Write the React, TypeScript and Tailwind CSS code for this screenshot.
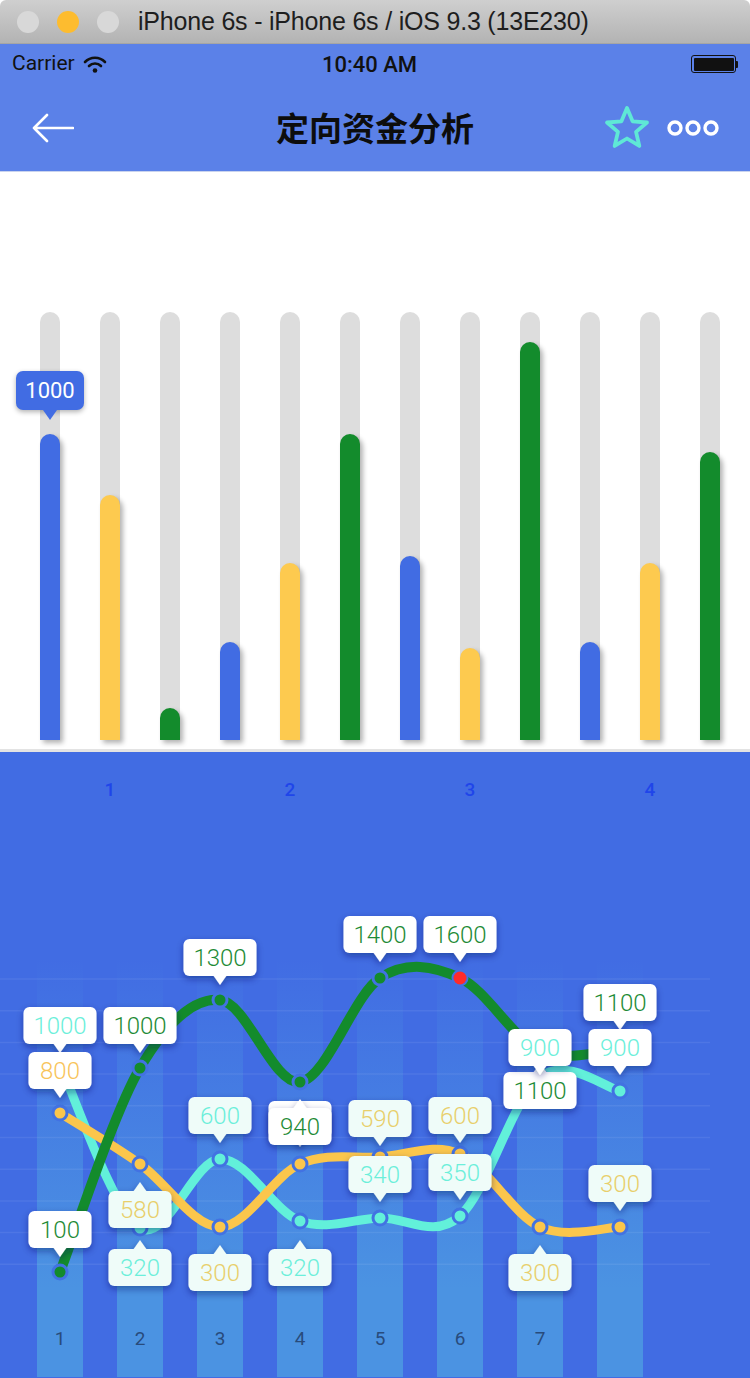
import React from 'react';

const GREEN = '#138b2c';
const CYAN = '#62f0da';
const YELLOW = '#fbc64c';

const bars = [
  { h: 306, c: 'bg-[#416ce3]' },
  { h: 245, c: 'bg-[#fdca4f]' },
  { h: 32, c: 'bg-[#138b2c]' },
  { h: 98, c: 'bg-[#416ce3]' },
  { h: 177, c: 'bg-[#fdca4f]' },
  { h: 306, c: 'bg-[#138b2c]' },
  { h: 184, c: 'bg-[#416ce3]' },
  { h: 92, c: 'bg-[#fdca4f]' },
  { h: 398, c: 'bg-[#138b2c]' },
  { h: 98, c: 'bg-[#416ce3]' },
  { h: 177, c: 'bg-[#fdca4f]' },
  { h: 288, c: 'bg-[#138b2c]' },
];

const xs = [60, 140, 220, 300, 380, 460, 540, 620];
const greenY = [1273, 1069, 1001, 1083, 979, 979, 1052, 1050];
const cyanY = [1066, 1229, 1160, 1222, 1219, 1217, 1078, 1092];
const yellowY = [1114, 1165, 1228, 1165, 1158, 1155, 1228, 1228];

// catmull-rom through the points
function smooth(ys: number[]) {
  const p = ys.map((y, i) => [xs[i], y]);
  let d = `M${p[0][0]},${p[0][1]}`;
  for (let i = 0; i < p.length - 1; i++) {
    const p0 = p[i - 1] || p[i];
    const p1 = p[i];
    const p2 = p[i + 1];
    const p3 = p[i + 2] || p2;
    const c1 = [p1[0] + (p2[0] - p0[0]) / 6, p1[1] + (p2[1] - p0[1]) / 6];
    const c2 = [p2[0] - (p3[0] - p1[0]) / 6, p2[1] - (p3[1] - p1[1]) / 6];
    d += ` C${c1[0]},${c1[1]} ${c2[0]},${c2[1]} ${p2[0]},${p2[1]}`;
  }
  return d;
}

type Lbl = { x: number; y: number; t: string; c: string; dir: 'up' | 'down'; tint?: boolean };

const TG = '#1e8b36';
const TC = '#6cefda';
const TY = '#e8cf6b';

const labels: Lbl[] = [
  { x: 60, y: 1008, t: '1000', c: TC, dir: 'down' },
  { x: 60, y: 1053, t: '800', c: '#f8c45a', dir: 'down' },
  { x: 140, y: 1008, t: '1000', c: TG, dir: 'down' },
  { x: 220, y: 940, t: '1300', c: TG, dir: 'down' },
  { x: 300, y: 1102, t: '', c: TY, dir: 'down' },
  { x: 300, y: 1109, t: '940', c: TG, dir: 'up' },
  { x: 380, y: 917, t: '1400', c: TG, dir: 'down' },
  { x: 460, y: 917, t: '1600', c: TG, dir: 'down' },
  { x: 540, y: 1073, t: '1100', c: TG, dir: 'up' },
  { x: 540, y: 1030, t: '900', c: TC, dir: 'down' },
  { x: 620, y: 985, t: '1100', c: TG, dir: 'down' },
  { x: 620, y: 1030, t: '900', c: TC, dir: 'down' },
  { x: 140, y: 1192, t: '580', c: TY, dir: 'up', tint: true },
  { x: 140, y: 1250, t: '320', c: TC, dir: 'up', tint: true },
  { x: 220, y: 1098, t: '600', c: TC, dir: 'down', tint: true },
  { x: 220, y: 1255, t: '300', c: TY, dir: 'up', tint: true },
  { x: 300, y: 1250, t: '320', c: TC, dir: 'up', tint: true },
  { x: 380, y: 1101, t: '590', c: TY, dir: 'down', tint: true },
  { x: 380, y: 1157, t: '340', c: TC, dir: 'down', tint: true },
  { x: 460, y: 1098, t: '600', c: TY, dir: 'down', tint: true },
  { x: 460, y: 1155, t: '350', c: TC, dir: 'down', tint: true },
  { x: 540, y: 1255, t: '300', c: TY, dir: 'up', tint: true },
  { x: 620, y: 1166, t: '300', c: TY, dir: 'down', tint: true },
  { x: 60, y: 1212, t: '100', c: TG, dir: 'down' },
];

function Label({ l }: { l: Lbl }) {
  const w = l.t.length === 4 ? 73 : 63;
  const h = 37;
  const tri =
    l.dir === 'down'
      ? `M${l.x - 7},${l.y + h - 1} L${l.x},${l.y + h + 9} L${l.x + 7},${l.y + h - 1} Z`
      : `M${l.x - 7},${l.y + 1} L${l.x},${l.y - 9} L${l.x + 7},${l.y + 1} Z`;
  const fill = l.tint ? '#effcf9' : '#ffffff';
  return (
    <g>
      <g filter="url(#lblShadow)">
        <rect x={l.x - w / 2} y={l.y} width={w} height={h} rx={6} fill={fill} />
        <path d={tri} fill={fill} />
      </g>
      {l.t && (
        <text x={l.x} y={l.y + 27} textAnchor="middle" fontSize={24} fontWeight={300} fill={l.c} fontFamily="Roboto, sans-serif">
          {l.t}
        </text>
      )}
    </g>
  );
}

function Dots({ ys, color }: { ys: number[]; color: string }) {
  return (
    <>
      {ys.map((y, i) => (
        <g key={i}>
          <circle cx={xs[i]} cy={y} r={8.5} fill="#4272e2" />
          <circle cx={xs[i]} cy={y} r={5.5} fill={color} />
        </g>
      ))}
    </>
  );
}

function Star() {
  const pts: string[] = [];
  for (let i = 0; i < 10; i++) {
    const r = i % 2 === 0 ? 21 : 9.5;
    const a = -Math.PI / 2 + (i * Math.PI) / 5;
    pts.push(`${23 + r * Math.cos(a)},${24 + r * Math.sin(a)}`);
  }
  return (
    <svg width="46" height="46" viewBox="0 0 46 46">
      <polygon points={pts.join(' ')} fill="none" stroke="#5fe8d6" strokeWidth="3.8" strokeLinejoin="round" />
    </svg>
  );
}

export default function App() {
  const gridYs = Array.from({ length: 10 }, (_, k) => 980 + k * 31.7);

  return (
    <div className="w-[750px] h-[1378px] flex flex-col bg-white overflow-hidden" style={{ fontFamily: 'Roboto, "Liberation Sans", sans-serif' }}>
      {/* mac window title */}
      <div className="h-[44px] flex items-center rounded-t-[6px] bg-gradient-to-b from-[#cfcfcf] to-[#b3b3b3] border-b border-[#a5a5a5]">
        <div className="flex items-center gap-[18px] pl-[17px]">
          <span className="w-[22px] h-[22px] rounded-full bg-[#d8d8d8]" />
          <span className="w-[22px] h-[22px] rounded-full bg-[#fdbc2f]" />
          <span className="w-[22px] h-[22px] rounded-full bg-[#d8d8d8]" />
        </div>
        <span className="ml-[19px] text-[25px] text-[#1e1e1e] tracking-[-0.2px]" style={{ fontFamily: '"Liberation Sans", sans-serif' }}>
          iPhone 6s - iPhone 6s / iOS 9.3 (13E230)
        </span>
      </div>

      {/* nav */}
      <div className="h-[128px] bg-[#5b81e8] flex flex-col border-b border-[#c9d3ee]">
        <div className="h-[40px] flex items-center justify-between px-[12px] relative">
          <div className="flex items-center gap-[8px]">
            <span className="text-[21px] text-[#111]">Carrier</span>
            <svg width="24" height="18" viewBox="0 0 24 18">
              <path d="M2 7 A14 14 0 0 1 22 7" fill="none" stroke="#111" strokeWidth="2.6" strokeLinecap="round" />
              <path d="M6 11 A8.5 8.5 0 0 1 18 11" fill="none" stroke="#111" strokeWidth="2.6" strokeLinecap="round" />
              <circle cx="12" cy="15.5" r="2.3" fill="#111" />
            </svg>
          </div>
          <span className="absolute left-[322px] text-[22px] font-medium text-[#111]">10:40 AM</span>
          <div className="flex items-center">
            <div className="w-[45px] h-[18px] rounded-[3px] border-[1.5px] border-[#111] p-[1.5px]">
              <div className="w-full h-full bg-[#111] rounded-[1px]" />
            </div>
            <div className="w-[2px] h-[7px] bg-[#111] rounded-r-[1px]" />
          </div>
        </div>
        <div className="flex-1 flex items-center justify-between pl-[32px] pr-[31px] relative">
          <svg width="42" height="30" viewBox="0 0 42 30">
            <path d="M15 2 L2 15 L15 28 M2 15 H41" fill="none" stroke="#fff" strokeWidth="2.6" strokeLinecap="round" strokeLinejoin="round" />
          </svg>
          <span
            className="absolute left-0 right-0 text-center text-[33px] font-semibold text-[#0d0d0d] pointer-events-none"
            style={{ fontFamily: '"Noto Sans CJK SC", sans-serif' }}
          >
            定向资金分析
          </span>
          <div className="flex items-center gap-[17px]">
            <Star />
            <svg width="52" height="18" viewBox="0 0 52 18">
              <circle cx="8" cy="9" r="6" fill="none" stroke="#fff" strokeWidth="3.4" />
              <circle cx="26" cy="9" r="6" fill="none" stroke="#fff" strokeWidth="3.4" />
              <circle cx="44" cy="9" r="6" fill="none" stroke="#fff" strokeWidth="3.4" />
            </svg>
          </div>
        </div>
      </div>

      {/* bar chart */}
      <div className="h-[577px] bg-white pt-[140px]">
        <div className="flex items-end gap-[40px] pl-[40px]">
          {bars.map((b, i) => (
            <div key={i} className="relative w-[20px] h-[428px] rounded-t-full bg-[#dddddd] flex flex-col justify-end">
              <div className={`w-[20px] rounded-t-full ${b.c} shadow-[3px_3px_5px_rgba(0,0,0,0.3)]`} style={{ height: b.h }} />
              {i === 0 && (
                <div className="absolute left-[-24px] top-[59px] flex flex-col items-center">
                  <div className="w-[68px] h-[39px] rounded-[7px] bg-[#416ce3] text-white text-[22px] flex items-center justify-center shadow-[0_2px_5px_rgba(0,0,0,0.3)]">
                    1000
                  </div>
                  <div className="w-0 h-0 border-l-[7px] border-r-[7px] border-t-[10px] border-l-transparent border-r-transparent border-t-[#416ce3]" />
                </div>
              )}
            </div>
          ))}
        </div>
      </div>
      <div className="h-[3px] bg-[#e3e3e3]" />

      {/* line chart */}
      <div className="flex-1 bg-[#416ce3] flex flex-col">
        <div className="h-[76px] grid grid-cols-4 w-[740px] pl-[20px] items-center">
          {['1', '2', '3', '4'].map((n) => (
            <span key={n} className="text-center text-[19px] font-medium text-[#1f45ea]">
              {n}
            </span>
          ))}
        </div>
        <svg width="750" height="549" viewBox="0 829 750 549" className="block">
          <defs>
            <linearGradient id="band" x1="0" y1="960" x2="0" y2="1290" gradientUnits="userSpaceOnUse">
              <stop offset="0" stopColor="#4b93e2" stopOpacity="0" />
              <stop offset="1" stopColor="#4b93e2" stopOpacity="1" />
            </linearGradient>
            <filter id="lblShadow" x="-30%" y="-40%" width="160%" height="190%">
              <feDropShadow dx="0" dy="3" stdDeviation="3.5" floodColor="#0a1f60" floodOpacity="0.45" />
            </filter>
          </defs>
          {xs.map((x) => (
            <rect key={x} x={x - 23} y={950} width={46} height={430} fill="url(#band)" />
          ))}
          {gridYs.map((y) => (
            <line key={y} x1={0} x2={710} y1={y} y2={y} stroke="#ffffff" strokeOpacity="0.07" strokeWidth="1.5" />
          ))}
          <path d={smooth(cyanY)} fill="none" stroke={CYAN} strokeWidth="9" strokeLinecap="round" />
          <path d={smooth(yellowY)} fill="none" stroke={YELLOW} strokeWidth="9" strokeLinecap="round" />
          <path d={smooth(greenY)} fill="none" stroke={GREEN} strokeWidth="10" strokeLinecap="round" />
          <Dots ys={cyanY} color={CYAN} />
          <Dots ys={yellowY} color={YELLOW} />
          <Dots ys={greenY} color={GREEN} />
          <circle cx={460} cy={979} r={6.5} fill="#ff2b2b" />
          {['1', '2', '3', '4', '5', '6', '7'].map((n, i) => (
            <text key={n} x={xs[i]} y={1346} textAnchor="middle" fontSize={19} fill="#284b7c" fontFamily="Roboto, sans-serif">
              {n}
            </text>
          ))}
          {labels.map((l, i) => (
            <Label key={i} l={l} />
          ))}
        </svg>
      </div>
    </div>
  );
}
